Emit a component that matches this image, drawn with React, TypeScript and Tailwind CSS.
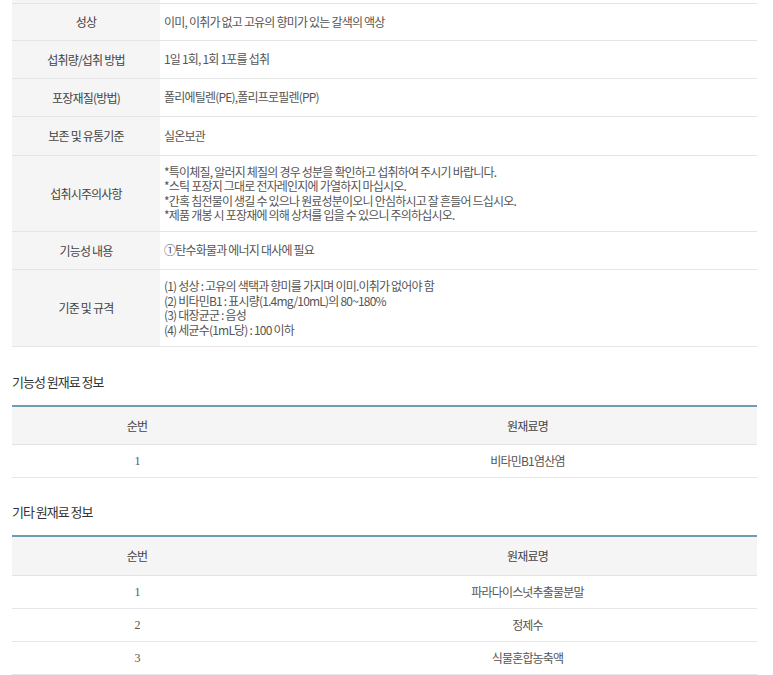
const font = { fontFamily: '"Malgun Gothic", "Noto Sans CJK KR", "Noto Sans", sans-serif' };

const specRows: { label: string; h: string; lines: string[] }[] = [
  { label: "성상", h: "h-[37px]", lines: ["이미, 이취가 없고 고유의 향미가 있는 갈색의 액상"] },
  { label: "섭취량/섭취 방법", h: "h-[38px]", lines: ["1일 1회, 1회 1포를 섭취"] },
  { label: "포장재질(방법)", h: "h-[38px]", lines: ["폴리에틸렌(PE),폴리프로필렌(PP)"] },
  { label: "보존 및 유통기준", h: "h-[39px]", lines: ["실온보관"] },
  {
    label: "섭취시주의사항",
    h: "h-[76px]",
    lines: [
      "*특이체질, 알러지 체질의 경우 성분을 확인하고 섭취하여 주시기 바랍니다.",
      "*스틱 포장지 그대로 전자레인지에 가열하지 마십시오.",
      "*간혹 침전물이 생길 수 있으나 원료성분이오니 안심하시고 잘 흔들어 드십시오.",
      "*제품 개봉 시 포장재에 의해 상처를 입을 수 있으니 주의하십시오.",
    ],
  },
  { label: "기능성 내용", h: "h-[38px]", lines: ["①탄수화물과 에너지 대사에 필요"] },
  {
    label: "기준 및 규격",
    h: "h-[77px]",
    lines: [
      "(1) 성상 : 고유의 색택과 향미를 가지며 이미.이취가 없어야 함",
      "(2) 비타민B1 : 표시량(1.4mg/10mL)의 80~180%",
      "(3) 대장균군 : 음성",
      "(4) 세균수(1mL당) : 100 이하",
    ],
  },
];

function MaterialTable({ items, headerH }: { items: string[]; headerH: string }) {
  return (
    <div className="mx-[12px] w-[745px] border-t-2 border-[#6f9cb3]">
      <div className={`flex ${headerH} items-center bg-[#f5f5f5] border-b border-[#e3e3e3] text-[12px] tracking-[-0.8px] text-[#444]`}>
        <div className="w-[250px] text-center">순번</div>
        <div className="flex-1 text-center pl-[36px]">원재료명</div>
      </div>
      {items.map((name, i) => (
        <div key={name} className="flex h-[33px] items-center border-b border-[#e6e6e6] text-[12px] tracking-[-0.8px] text-[#555]">
          <div className="w-[250px] text-center" style={{ fontFamily: '"Liberation Serif", serif' }}>{i + 1}</div>
          <div className="flex-1 text-center pl-[36px]">{name}</div>
        </div>
      ))}
    </div>
  );
}

export default function App() {
  return (
    <div className="w-[773px] h-[675px] bg-white overflow-hidden" style={font}>
      {/* Product spec table */}
      <div className="mx-[12px] w-[745px]">
        <div className="flex h-[3px]">
          <div className="w-[148px] bg-[#f5f5f5]" />
        </div>
        {specRows.map((r) => (
          <div key={r.label} className={`flex ${r.h} border-t border-[#e5e5e5]`}>
            <div className="w-[148px] shrink-0 bg-[#f5f5f5] flex items-center justify-center text-[12px] tracking-[-0.8px] text-[#444]">
              {r.label}
            </div>
            <div className="flex-1 flex flex-col justify-center pl-[4px] text-[12px] leading-[14.5px] tracking-[-0.8px] text-[#555]">
              {r.lines.map((l) => (
                <div key={l} className="h-[14.5px] whitespace-nowrap">{l}</div>
              ))}
            </div>
          </div>
        ))}
        <div className="border-t border-[#e5e5e5]" />
      </div>

      <h3 className="mt-[25px] ml-[12px] text-[13px] tracking-[-1px] text-[#333] font-normal leading-[20px]">기능성 원재료 정보</h3>
      <div className="mt-[13px]">
        <MaterialTable items={["비타민B1염산염"]} headerH="h-[38px]" />
      </div>

      <h3 className="mt-[24px] ml-[12px] text-[13px] tracking-[-1px] text-[#333] font-normal leading-[20px]">기타 원재료 정보</h3>
      <div className="mt-[13px]">
        <MaterialTable items={["파라다이스넛추출물분말", "정제수", "식물혼합농축액"]} headerH="h-[39px]" />
      </div>
    </div>
  );
}
